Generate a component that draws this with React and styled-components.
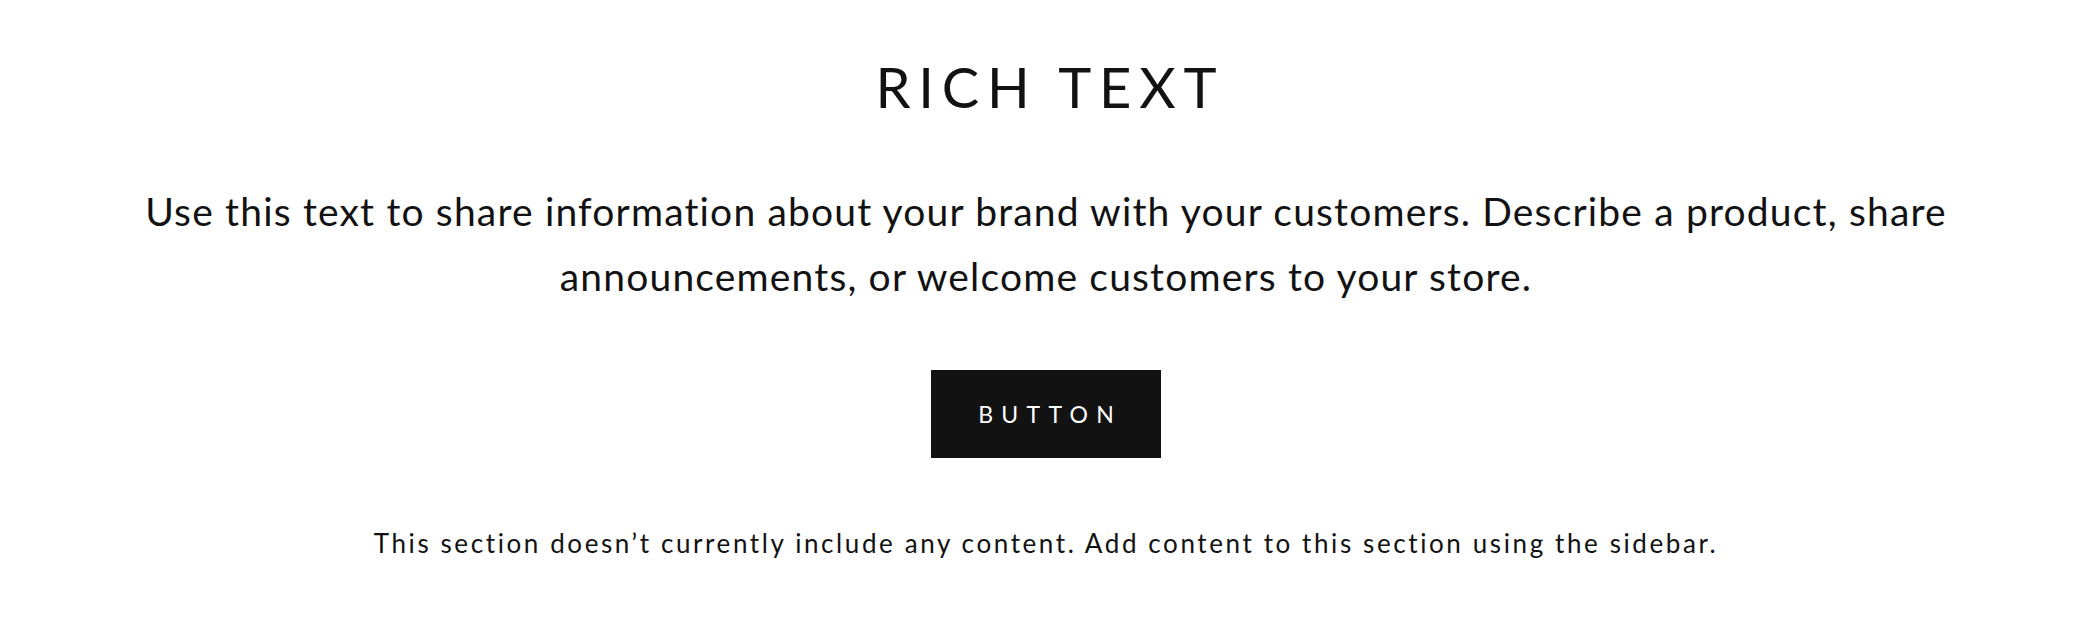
import React from 'react';
import styled, { createGlobalStyle } from 'styled-components';

const GlobalStyle = createGlobalStyle`
  body {
    margin: 0;
    background: #ffffff;
    color: #121212;
    font-family: 'Lato', 'Noto Sans', sans-serif;
  }
`;

const Section = styled.section`
  display: flex;
  flex-direction: column;
  align-items: center;
  padding: 53px 32px 40px 40px;
  text-align: center;
`;

const Heading = styled.h2`
  margin: 0;
  font-family: 'Lato', sans-serif;
  font-weight: 400;
  font-size: 56px;
  line-height: 1.2;
  letter-spacing: 0.14em;
  text-indent: 0.14em;
  color: #121212;
`;

const Text = styled.p`
  margin: 59px 0 0;
  max-width: 1860px;
  font-size: 39px;
  line-height: 65px;
  letter-spacing: 0.03em;
`;

const Button = styled.a`
  display: flex;
  align-items: center;
  justify-content: center;
  margin-top: 61px;
  width: 230px;
  height: 88px;
  background: #121212;
  color: #ffffff;
  font-size: 23px;
  letter-spacing: 0.36em;
  text-indent: 0.36em;
  text-decoration: none;
`;

const Note = styled.p`
  margin: 69px 0 0;
  font-size: 26px;
  letter-spacing: 0.1em;
`;

export default function App() {
  return (
    <>
      <GlobalStyle />
      <Section>
        <Heading>RICH TEXT</Heading>
        <Text>
          Use this text to share information about your brand with your customers. Describe a product, share
          announcements, or welcome customers to your store.
        </Text>
        <Button href="#">BUTTON</Button>
        <Note>This section doesn’t currently include any content. Add content to this section using the sidebar.</Note>
      </Section>
    </>
  );
}
